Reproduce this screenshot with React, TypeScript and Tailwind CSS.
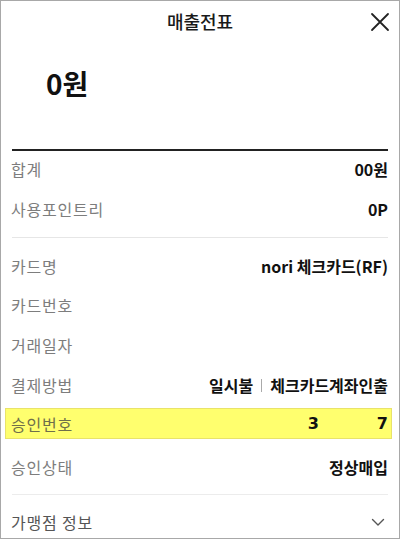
import React from "react";

const font = { fontFamily: '"Noto Sans CJK KR", "Noto Sans", sans-serif' };

function Row({ label, value, h = "h-[40px]", extra = "" }: { label: string; value?: React.ReactNode; h?: string; extra?: string }) {
  return (
    <div className={`flex items-center justify-between pl-[10px] pr-[11px] shrink-0 ${h} ${extra}`}>
      <span className="text-[16px] tracking-[0.8px] text-[#7d7d7d]">{label}</span>
      {value !== undefined && <span className="text-[16px] font-bold text-[#111]">{value}</span>}
    </div>
  );
}

export default function App() {
  return (
    <div className="w-[400px] h-[539px] border border-[#a8a8a8] bg-white overflow-hidden flex flex-col" style={font}>
      <div className="relative h-[40px] flex items-center justify-center shrink-0">
        <span className="text-[18px] font-medium text-[#1a1a1a]">매출전표</span>
        <svg className="absolute right-[9px] top-[11px]" width="20" height="20" viewBox="0 0 20 20" fill="none" stroke="#222" strokeWidth="1.8" strokeLinecap="round">
          <path d="M2 2 L18 18 M18 2 L2 18" />
        </svg>
      </div>
      <div className="h-[84px] flex items-center pl-[45px] shrink-0">
        <span className="text-[28px] font-bold text-[#111] leading-none">0원</span>
      </div>
      <div className="mt-[24px] mx-[11px] h-[2px] bg-[#222] shrink-0" />
      <Row label="합계" value="00원" h="h-[36px]" />
      <Row label="사용포인트리" value="0P" h="h-[44px]" />
      <div className="mt-[6px] mx-[11px] h-px bg-[#e6e6e6] shrink-0" />
      <div className="h-[8px] shrink-0" />
      <Row label="카드명" value="nori 체크카드(RF)" h="h-[39px]" />
      <Row label="카드번호" />
      <Row label="거래일자" />
      <Row label="결제방법" value={
        <span className="flex items-center">
          일시불
          <span className="mx-[8px] w-px h-[13px] bg-[#aaa] inline-block" />
          체크카드계좌인출
        </span>
      } />
      <div className="mt-[3px] ml-[4px] mr-[7px] h-[31px] bg-[#ffff6e] border border-[#e9e36a] flex items-center justify-between pl-[5px] pr-[3px] shrink-0">
        <span className="text-[16px] tracking-[0.8px] text-[#6f6f4a]">승인번호</span>
        <span className="flex items-center gap-[58px] text-[16px] font-bold text-[#111]" style={{ fontFamily: '"DejaVu Sans", sans-serif' }}>
          <span>3</span>
          <span>7</span>
        </span>
      </div>
      <Row label="승인상태" value="정상매입" h="h-[50px]" extra="mt-[3px]" />
      <div className="mt-[2px] mx-[11px] h-px bg-[#ececec] shrink-0" />
      <div className="flex items-center justify-between pl-[10px] pr-[14px] h-[54px] shrink-0">
        <span className="text-[16px] tracking-[0.8px] text-[#555]">가맹점 정보</span>
        <svg width="14" height="9" viewBox="0 0 14 9" fill="none" stroke="#555" strokeWidth="1.4" strokeLinecap="round" strokeLinejoin="round">
          <path d="M1.5 1.5 L7 7 L12.5 1.5" />
        </svg>
      </div>
    </div>
  );
}
